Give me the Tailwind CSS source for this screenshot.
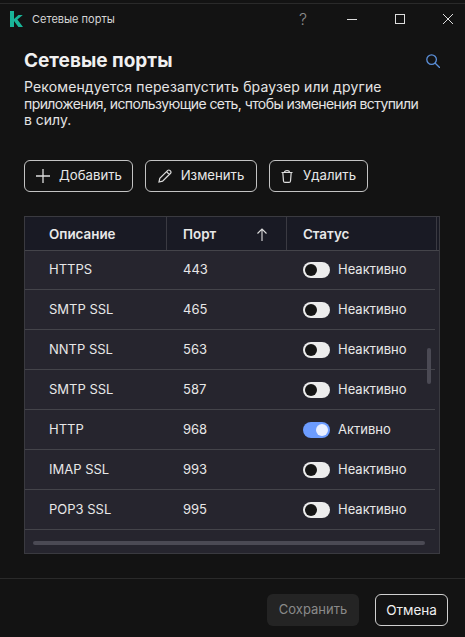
<!DOCTYPE html>
<html lang="ru">
<head>
  <meta charset="UTF-8" />
  <title>Сетевые порты</title>
  <script src="https://cdn.jsdelivr.net/npm/@tailwindcss/browser@4"></script>
</head>
<body class="bg-[#131313] text-[#e8e8e8] font-[Inter,sans-serif]">
  <div class="w-[465px] h-[637px] flex flex-col overflow-hidden border-t-[1px] border-[#2a2a2a] mt-[3px]">
    <!-- title bar -->
    <div class="h-[30px] flex items-center text-[11px] text-[#d6d6d6] shrink-0">
      <svg class="ml-[10px] w-[13px] h-[16px]" viewBox="0 0 13 16"><path fill="#19b598" d="M0 0h4v8l4.400-4h4.400L7.400 8.600 13 16H8.400L4 10v6H0z"/></svg>
      <span class="ml-[9px]">Сетевые порты</span>
      <span class="ml-auto mr-[40px] text-[#8a8a8a] text-[16px] font-light">?</span>
      <svg class="w-[10px] h-[10px] mr-[38px]" viewBox="0 0 10 10"><path stroke="#ddd" stroke-width="1" d="M0 5.500h10"/></svg>
      <svg class="w-[10px] h-[10px] mr-[38px]" viewBox="0 0 10 10"><rect x=".5" y=".5" width="9" height="9" fill="none" stroke="#ddd"/></svg>
      <svg class="w-[10px] h-[10px] mr-[12px]" viewBox="0 0 10 10"><path stroke="#ddd" d="M0 0l10 10M10 0L0 10"/></svg>
    </div>
    <!-- content -->
    <div class="flex-1 px-[24px] pt-[14px]">
      <div class="flex items-center justify-between h-[26px]">
        <h1 class="text-[19px] font-bold text-[#f0f0f0] mt-[1px]">Сетевые порты</h1>
        <svg class="w-[14px] h-[14px] mr-[1px]" viewBox="0 0 14 14" fill="none" stroke="#5b8fd8" stroke-width="1.300"><circle cx="5.600" cy="5.600" r="4.800"/><path d="M9 9l5 5"/></svg>
      </div>
      <p class="mt-[5px] text-[14px] leading-[16.500px] text-[#e4e4e4] whitespace-nowrap"><span class="tracking-[0.13px]">Рекомендуется перезапустить браузер или другие</span><br><span class="tracking-[-0.58px]">приложения, использующие сеть, чтобы изменения вступили</span><br>в силу.</p>
      <!-- toolbar -->
      <div class="flex gap-[12px] mt-[31px] text-[13.200px]">
        <button class="h-[32px] w-[109px] flex items-center justify-center gap-[9px] pl-[1px] border border-[#c4c4c4] rounded-[6px]">
          <svg class="w-[14px] h-[14px]" viewBox="0 0 14 14"><path stroke="#ddd" stroke-width="1.300" d="M7 0v14M0 7h14"/></svg>Добавить
        </button>
        <button class="h-[32px] w-[112px] flex items-center justify-center gap-[9px] border border-[#c4c4c4] rounded-[6px]">
          <svg class="w-[14px] h-[14px]" viewBox="0 0 14 14" fill="none" stroke="#ddd" stroke-width="1.200"><path d="M1 13l.8-3.600L9.800 1.400a1.400 1.400 0 0 1 2 0l.8.8a1.400 1.400 0 0 1 0 2L4.600 12.200zM8.500 2.700l2.800 2.800"/></svg>Изменить
        </button>
        <button class="h-[32px] w-[99px] flex items-center justify-center gap-[10px] border border-[#c4c4c4] rounded-[6px]">
          <svg class="w-[12px] h-[14px]" viewBox="0 0 12 14" fill="none" stroke="#ddd" stroke-width="1.200"><path d="M.5 3.500h11M3.500 3.500C3.500 1 8.500 1 8.500 3.500M1.800 3.500l.7 8.500q.1 1.400 1.500 1.400h4q1.400 0 1.500-1.400l.7-8.500"/></svg>Удалить
        </button>
      </div>
      <!-- table -->
      <div class="relative mt-[24px] w-[416px] h-[338px] bg-[#26252e] border border-[#3a3a40] text-[13px]">
        <div class="flex h-[34px] bg-[#191a24] border-b border-[#44444a] font-semibold text-[13.400px]">
          <div class="w-[142px] pl-[24px] pt-[2px] flex items-center border-r border-[#3a3a42]">Описание</div>
          <div class="w-[120px] pl-[16px] pr-[18px] pt-[2px] flex items-center justify-between border-r border-[#3a3a42]">Порт
            <svg class="w-[12px] h-[13px]" viewBox="0 0 12 13" fill="none" stroke="#ddd" stroke-width="1.100"><path d="M6 13V1M1.500 5.500L6 1l4.500 4.500"/></svg>
          </div>
          <div class="w-[150px] pl-[16px] pt-[2px] flex items-center border-r border-[#3a3a42]">Статус</div>
        </div>
        <div class="w-[410px]">
          <div class="flex items-center h-[39px] pt-[1px] border-b border-[#44444a]"><span class="w-[142px] pl-[24px]">HTTPS</span><span class="w-[120px] pl-[16px]">443</span><span class="pl-[16px] flex items-center gap-[8px]"><span class="w-[27px] h-[16px] rounded-full bg-[#ececec] flex items-center pl-[2px]"><span class="w-[12px] h-[12px] rounded-full bg-[#151515]"></span></span>Неактивно</span></div>
          <div class="flex items-center h-[40px] pt-[1px] border-b border-[#44444a]"><span class="w-[142px] pl-[24px]">SMTP SSL</span><span class="w-[120px] pl-[16px]">465</span><span class="pl-[16px] flex items-center gap-[8px]"><span class="w-[27px] h-[16px] rounded-full bg-[#ececec] flex items-center pl-[2px]"><span class="w-[12px] h-[12px] rounded-full bg-[#151515]"></span></span>Неактивно</span></div>
          <div class="flex items-center h-[40px] pt-[1px] border-b border-[#44444a]"><span class="w-[142px] pl-[24px]">NNTP SSL</span><span class="w-[120px] pl-[16px]">563</span><span class="pl-[16px] flex items-center gap-[8px]"><span class="w-[27px] h-[16px] rounded-full bg-[#ececec] flex items-center pl-[2px]"><span class="w-[12px] h-[12px] rounded-full bg-[#151515]"></span></span>Неактивно</span></div>
          <div class="flex items-center h-[40px] pt-[1px] border-b border-[#44444a]"><span class="w-[142px] pl-[24px]">SMTP SSL</span><span class="w-[120px] pl-[16px]">587</span><span class="pl-[16px] flex items-center gap-[8px]"><span class="w-[27px] h-[16px] rounded-full bg-[#ececec] flex items-center pl-[2px]"><span class="w-[12px] h-[12px] rounded-full bg-[#151515]"></span></span>Неактивно</span></div>
          <div class="flex items-center h-[40px] pt-[1px] border-b border-[#44444a]"><span class="w-[142px] pl-[24px]">HTTP</span><span class="w-[120px] pl-[16px]">968</span><span class="pl-[16px] flex items-center gap-[8px]"><span class="w-[27px] h-[16px] rounded-full bg-[#6c9cff] flex items-center justify-end pr-[2px]"><span class="w-[12px] h-[12px] rounded-full bg-[#e8eeff]"></span></span>Активно</span></div>
          <div class="flex items-center h-[40px] pt-[1px] border-b border-[#44444a]"><span class="w-[142px] pl-[24px]">IMAP SSL</span><span class="w-[120px] pl-[16px]">993</span><span class="pl-[16px] flex items-center gap-[8px]"><span class="w-[27px] h-[16px] rounded-full bg-[#ececec] flex items-center pl-[2px]"><span class="w-[12px] h-[12px] rounded-full bg-[#151515]"></span></span>Неактивно</span></div>
          <div class="flex items-center h-[40px] pt-[1px] border-b border-[#44444a]"><span class="w-[142px] pl-[24px]">POP3 SSL</span><span class="w-[120px] pl-[16px]">995</span><span class="pl-[16px] flex items-center gap-[8px]"><span class="w-[27px] h-[16px] rounded-full bg-[#ececec] flex items-center pl-[2px]"><span class="w-[12px] h-[12px] rounded-full bg-[#151515]"></span></span>Неактивно</span></div>
        </div>
        <!-- overlay scrollbars -->
        <div class="absolute left-[402px] top-[131px] w-[4px] h-[36px] rounded-full bg-[#4b4a54]"></div>
        <div class="absolute left-[8px] top-[324px] w-[392px] h-[4px] rounded-full bg-[#4b4a54]"></div>
      </div>
    </div>
    <!-- footer -->
    <div class="h-[59px] mb-[3px] shrink-0 border-t border-[#2a2a2a] flex items-start justify-end gap-[16px] pt-[15px] pr-[17px] text-[13px]">
      <button class="h-[32px] w-[92px] rounded-[6px] bg-[#242424] text-[#8a8a8a]">Сохранить</button>
      <button class="h-[32px] w-[73px] rounded-[6px] border border-[#d0d0d0] text-[#f0f0f0] text-[13.500px]">Отмена</button>
    </div>
  </div>
</body>
</html>
